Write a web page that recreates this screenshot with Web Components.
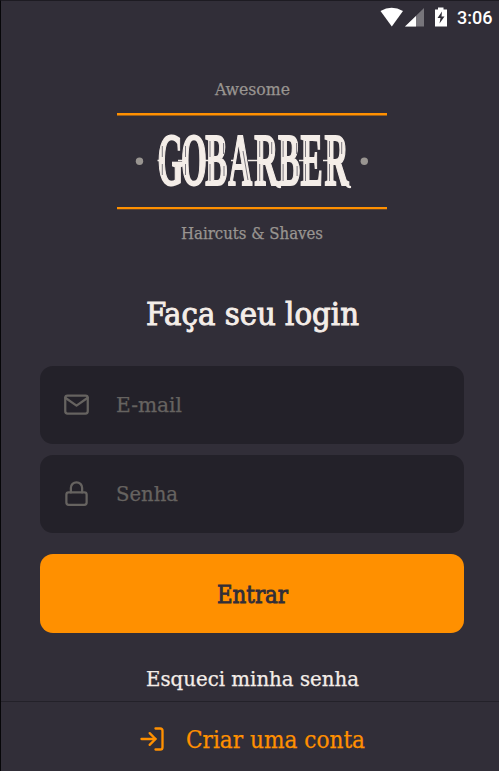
<!DOCTYPE html>
<html lang="pt-BR">
<head>
<meta charset="utf-8">
<title>GoBarber</title>
<style>
html, body { margin: 0; height: 100%; }
body { overflow: hidden; background: #312e38; }
</style>
</head>
<body>
<login-screen></login-screen>
<script>
const FONT = "'Roboto Slab','DejaVu Serif Condensed','DejaVu Serif',serif";
const define = (name, html, setup) => {
  const template = document.createElement('template');
  template.innerHTML = html;
  customElements.define(name, class extends HTMLElement {
    connectedCallback() {
      if (this.shadowRoot) return;
      this.attachShadow({ mode: 'open' }).append(template.content.cloneNode(true));
      if (setup) setup(this, this.shadowRoot);
    }
  });
};

/* A line of slab text fitted to a given width. Ink colour is inherited. */
define('slab-text', `
<style>
:host { display: block; flex: none; }
svg { display: block; overflow: visible; }
text { font-family: ${FONT}; fill: currentColor; stroke: currentColor; }
</style>
<svg><text></text></svg>`, (host, root) => {
  const svg = root.querySelector('svg'), text = root.querySelector('text');
  const size = +host.getAttribute('size'), w = +host.getAttribute('width');
  const h = Math.round(size * 1.4);
  svg.setAttribute('width', w);
  svg.setAttribute('height', h);
  text.setAttribute('y', Math.round(size * 1.05));
  text.setAttribute('font-size', size);
  text.setAttribute('textLength', w);
  text.setAttribute('lengthAdjust', 'spacingAndGlyphs');
  text.setAttribute('stroke-width', host.getAttribute('weight') || .25);
  text.textContent = host.getAttribute('label');
});

define('status-bar', `
<style>
:host { display: flex; height: 34px; box-sizing: border-box; padding: 0 6px 0 0; justify-content: flex-end; color: #fff; }
svg { display: block; flex: none; margin-top: -1px; }
span { font: 500 18px/33px Roboto, sans-serif; width: 36px; margin-left: 8px; white-space: nowrap; }
</style>
<svg width="69" height="34" viewBox="0 0 69 34">
  <path fill="#fff" d="M.5 11Q11.500 4.500 23 11L11.800 26.500Z"/>
  <path fill="#77757b" d="M44 8V26.500H25Z"/>
  <path fill="#fff" d="M36 16V26.500H25Z"/>
  <path fill="#fff" d="M58 7.500H63.500V9.500H67V26.500H55V9.500H58Z"/>
  <path fill="#312e38" d="M62 11.500L57.500 18H60.500L59.500 23.500L64.500 16.500H61.500Z"/>
</svg>
<span>3:06</span>`);

define('brand-logo', `
<style>
:host { display: flex; flex-direction: column; align-items: center; width: 270px; color: #999591; }
.plate { width: 270px; height: 96px; margin: 12px 0; }
.plate svg { display: block; overflow: visible; }
.name { font: bold 74px 'Liberation Serif', serif; fill: #f4ede8; stroke: #f4ede8; stroke-width: 2; }
</style>
<slab-text label="Awesome" size="17" width="75"></slab-text>
<div class="plate">
<svg width="270" height="96" viewBox="117 113 270 96">
  <path stroke="#ff9000" stroke-width="2.400" d="M117 114.200H387M117 208.100H387"/>
  <circle cx="139.500" cy="161.300" r="3.700" fill="#999591"/>
  <circle cx="364.300" cy="161.300" r="3.700" fill="#999591"/>
  <text class="name" transform="translate(0 185) scale(.45 1)" x="350 402 456 507 565 618 668 721">GOBARBER</text>
  <path stroke="#f4ede8" stroke-width="1.400" d="M157.500 160.500H161M178 160.500H185M202 160.500H209M231 160.500H236M248 160.500H258M299 160.500H304M323 160.500H328"/>
  <path stroke="#5c5862" stroke-width=".8" fill="none" d="M162.300 146V157M162.300 164V175M185.500 146V157M185.500 164V175M210 141V157M210 164V181M223.500 143V154M224 166V176M243 151L248 180M259.700 141V157M259.700 164V181M271.700 142V154M283.100 141V157M283.100 164V181M296.600 143V154M297.100 166V176M305.500 141V157M305.500 164V181M329.500 141V157M329.500 164V181M341.700 142V154"/>
  <path stroke="#f4ede8" stroke-width="2.400" fill="none" stroke-linecap="round" d="M274 180Q276 187 280 187M345 180Q346 187 350 187"/>
</svg>
</div>
<slab-text label="Haircuts &amp; Shaves" size="17" width="142"></slab-text>`);

define('line-icon', `
<style>
:host { display: block; flex: none; width: 27px; height: 27px; }
svg { display: block; width: 100%; height: 100%; fill: none; stroke: currentColor; stroke-width: 2; stroke-linecap: round; stroke-linejoin: round; }
</style>
<svg viewBox="0 0 24 24"></svg>`, (host, root) => {
  root.querySelector('svg').innerHTML = {
    mail: '<path d="M4 4h16c1.100 0 2 .9 2 2v12c0 1.100-.9 2-2 2H4c-1.100 0-2-.9-2-2V6c0-1.100.9-2 2-2z"/><polyline points="22,6 12,13 2,6"/>',
    lock: '<rect x="3" y="11" width="18" height="11" rx="2"/><path d="M7 11V7a5 5 0 0 1 10 0v4"/>',
    login: '<path d="M15 3h4a2 2 0 0 1 2 2v14a2 2 0 0 1-2 2h-4"/><polyline points="10 17 15 12 10 7"/><line x1="15" y1="12" x2="3" y2="12"/>'
  }[host.getAttribute('name')];
});

define('text-field', `
<style>
:host { display: flex; align-items: center; height: 78px; box-sizing: border-box; padding: 0 0 1px 23px; border-radius: 13px; background: #232129; color: #666360; gap: 26px; }
</style>
<slot name="icon"></slot><slot></slot>`);

define('main-button', `
<style>
:host { display: flex; align-items: center; justify-content: center; height: 79px; box-sizing: border-box; padding-top: 1px; border-radius: 13px; background: #ff9000; color: #312e38; }
</style>
<slot></slot>`);

define('account-link', `
<style>
:host { display: flex; height: 70px; box-sizing: border-box; border-top: 1px solid #232129; align-items: center; padding: 5px 0 0 137px; gap: 20px; color: #ff9000; }
line-icon { width: 28px; height: 28px; }
</style>
<line-icon name="login"></line-icon><slot></slot>`);

define('login-screen', `
<style>
:host { display: flex; flex-direction: column; width: 499px; height: 771px; box-sizing: border-box; border-left: 1px solid #060608; border-top: 1px solid #1d1b22; background: #312e38; color: #f4ede8; }
.logo { display: flex; justify-content: center; padding: 42px 0 0 4px; height: 212px; box-sizing: border-box; }
.title { display: flex; justify-content: center; padding-left: 4px; height: 119px; box-sizing: border-box; padding-top: 45px; }
form { display: grid; gap: 11px; margin: 0 35px 0 39px; }
main-button { margin-top: 10px; }
.forgot { display: flex; justify-content: center; padding: 31px 0 0 4px; flex: 1; box-sizing: border-box; }
</style>
<status-bar></status-bar>
<div class="logo"><brand-logo></brand-logo></div>
<div class="title"><slab-text label="Faça seu login" size="31.500" width="213" weight=".9"></slab-text></div>
<form>
  <text-field><line-icon slot="icon" name="mail"></line-icon><slab-text label="E-mail" size="21" width="66"></slab-text></text-field>
  <text-field><line-icon slot="icon" name="lock"></line-icon><slab-text label="Senha" size="21" width="62"></slab-text></text-field>
  <main-button><slab-text label="Entrar" size="23.500" width="71" weight=".8"></slab-text></main-button>
</form>
<div class="forgot"><slab-text label="Esqueci minha senha" size="21" width="213"></slab-text></div>
<account-link><slab-text label="Criar uma conta" size="23.500" width="179"></slab-text></account-link>`);
</script>
</body>
</html>
